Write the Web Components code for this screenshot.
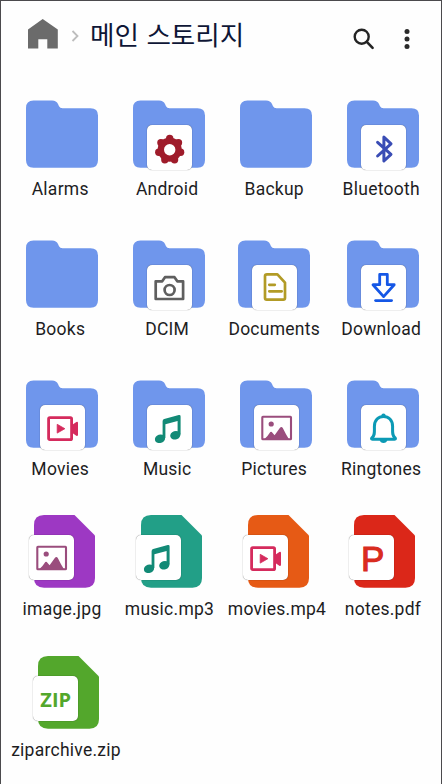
<!DOCTYPE html>
<html lang="ko">
<head>
<meta charset="UTF-8">
<title>메인 스토리지</title>
<style>
  * {
    box-sizing: border-box;
  }

  html, body {
    margin: 0;
    height: 100%;
    background: #fefefe;
    font-family: Roboto, 'Noto Sans CJK KR', sans-serif;
    color: #1d1d1f;
  }
</style>
</head>
<body>
<storage-screen>
  <storage-header slot="header">메인 스토리지</storage-header>

  <storage-item kind="folder">Alarms</storage-item>
  <storage-item kind="folder" badge="gear">Android</storage-item>
  <storage-item kind="folder">Backup</storage-item>
  <storage-item kind="folder" badge="bluetooth">Bluetooth</storage-item>

  <storage-item kind="folder">Books</storage-item>
  <storage-item kind="folder" badge="camera">DCIM</storage-item>
  <storage-item kind="folder" badge="document" style="--icon-shift: -2px">Documents</storage-item>
  <storage-item kind="folder" badge="download">Download</storage-item>

  <storage-item kind="folder" badge="movie">Movies</storage-item>
  <storage-item kind="folder" badge="music">Music</storage-item>
  <storage-item kind="folder" badge="picture">Pictures</storage-item>
  <storage-item kind="folder" badge="bell">Ringtones</storage-item>

  <storage-item kind="file" badge="picture" style="--tint: #9d38c3; --label-shift: 2px">image.jpg</storage-item>
  <storage-item kind="file" badge="music" style="--tint: #229f87; --label-shift: 2.5px">music.mp3</storage-item>
  <storage-item kind="file" badge="movie" style="--tint: #e65a15; --label-shift: 3px">movies.mp4</storage-item>
  <storage-item kind="file" badge="pdf" style="--tint: #db2719; --label-shift: 2px; --icon-shift: -1px">notes.pdf</storage-item>

  <storage-item kind="file" badge="zip" style="--tint: #53a72c; --label-shift: 6px; --icon-shift: 4px">ziparchive.zip</storage-item>
</storage-screen>

<script>
// Badge artwork, drawn on a 45x45 tile
const teeth = Array.from({ length: 7 }, (_, i) => {
  const a = (i * 2 * Math.PI) / 7 - Math.PI / 2;
  return `<circle cx="${(22.7 + 11.2 * Math.cos(a)).toFixed(2)}" cy="${(24.7 + 11.2 * Math.sin(a)).toFixed(2)}" r="3.7"/>`;
}).join('');

const BADGES = {
  gear: `
    <g fill="#9f1c2b">${teeth}<circle cx="22.7" cy="24.7" r="12.1"/></g>
    <circle cx="22.7" cy="24.7" r="5.7" fill="#fff"/>`,
  bluetooth: `
    <path d="M16.6 17.3 L30 29.3 L22.9 36 V12 L30 18.9 L16.6 31" fill="none" stroke="#3a4db5" stroke-width="3" stroke-linecap="round" stroke-linejoin="round"/>`,
  camera: `
    <g fill="none" stroke="#5f5f5f" stroke-width="2.7" stroke-linejoin="round">
      <path d="M8.7 16.3 H15.2 L18 12.2 H27.5 L30.3 16.3 H36.1 V34 H8.7 Z"/>
      <circle cx="22.6" cy="25" r="5"/>
    </g>`,
  document: `
    <g fill="none" stroke="#b29b26" stroke-width="2.7" stroke-linejoin="round" stroke-linecap="round">
      <path d="M15 9.3 H25.4 L33 17.6 V33 Q33 34.7 31.3 34.7 H14.7 Q13 34.7 13 33 V11 Q13 9.3 15 9.3 Z"/>
      <path d="M17.3 19.8 H22.8 M17.3 26.3 H29.7"/>
    </g>`,
  download: `
    <g fill="none" stroke="#1557e6" stroke-width="2.8" stroke-linejoin="round" stroke-linecap="round">
      <path d="M18.7 9.4 H26.3 V19.7 H33.2 L22.6 31.6 L12 19.7 H18.7 Z"/>
      <path d="M14.6 35.6 H30.6"/>
    </g>`,
  movie: `
    <g fill="#d52b5d">
      <rect x="8.6" y="12.6" width="23" height="22" rx="1.2" fill="none" stroke="#d52b5d" stroke-width="2.8"/>
      <path d="M17.2 19.3 L24.9 23.7 L17.2 28.1 Z" stroke="#d52b5d" stroke-width=".8" stroke-linejoin="round"/>
      <path d="M32.4 19.8 L36.3 17 Q38 16.4 38 18 V29.8 Q38 31.4 36.3 30.7 L32.4 28 Z"/>
    </g>`,
  music: `
    <g fill="#128a76">
      <path d="M15.6 16.2 Q15.6 14.5 17.2 14.1 L31.8 10.1 Q33.6 9.7 33.6 11.5 V29.5 H30.6 V16 L18.4 19.2 V33 H15.6 Z"/>
      <ellipse cx="13" cy="33.8" rx="5.2" ry="4.2" transform="rotate(-18 13 33.8)"/>
      <ellipse cx="28.3" cy="30.2" rx="5.2" ry="4.2" transform="rotate(-18 28.3 30.2)"/>
    </g>`,
  picture: `
    <rect x="8.3" y="11.8" width="28.7" height="22.5" rx=".6" fill="none" stroke="#9a4d7d" stroke-width="2.1"/>
    <circle cx="17.2" cy="19" r="2.6" fill="#9a4d7d"/>
    <path d="M10.5 34 Q13.5 31.5 15.6 28 Q17 25.7 18.6 28 L20.6 30.3 L25.8 23 Q27.4 20.8 28.8 23 Q31.5 28.6 34.8 34 Z" fill="#9a4d7d"/>`,
  bell: `
    <path d="M11 32.7 C14 30.5 13.4 27 13.4 21.5 C13.4 15 17.5 11.4 22.5 11.4 C27.5 11.4 31.6 15 31.6 21.5 C31.6 27 31 30.5 34 32.7 Q35.2 34.2 33.5 34.3 H11.5 Q9.8 34.2 11 32.7 Z" fill="none" stroke="#0c9ab5" stroke-width="3" stroke-linejoin="round"/>
    <path d="M20.3 11 Q20.3 8.6 22.5 8.6 Q24.7 8.6 24.7 11 Z M18.6 35 H26.4 Q25.6 38 22.5 38 Q19.4 38 18.6 35 Z" fill="#0c9ab5"/>`,
  pdf: `
    <text x="23.8" y="35.7" text-anchor="middle" font-family="'Liberation Sans', sans-serif" font-size="35" fill="#d92c1f" stroke="#d92c1f" stroke-width="1.1">P</text>`,
  zip: `
    <text x="22.7" y="31.2" text-anchor="middle" font-family="'Open Sans', sans-serif" font-weight="700" font-size="20" fill="#53a72c">ZIP</text>`
};

const SHAPES = {
  folder: `
    <svg class="shape" width="72" height="68" viewBox="0 0 72 68">
      <path d="M7.5 .5 H26 Q30.5 .5 32 4 L33 6.3 Q34 8.3 36.5 8.3 H64.5 Q72 8.3 72 15.5 V60 Q72 67.8 64.5 67.8 H7.5 Q0 67.8 0 60 V8 Q0 .5 7.5 .5 Z"/>
    </svg>`,
  file: `
    <svg class="shape" width="61" height="73" viewBox="0 0 61 73">
      <path d="M10 0 H40.5 L61 20.5 V63 Q61 72.7 51.5 72.7 H10 Q0 72.7 0 63 V10 Q0 0 10 0 Z"/>
    </svg>`
};

class ItemBadge extends HTMLElement {
  constructor() {
    super();
    this.attachShadow({ mode: 'open' });
  }

  connectedCallback() {
    this.shadowRoot.innerHTML = `
    <style>
      :host {
        display: block;
        width: 45px;
        height: 45px;
        border-radius: 5px;
        background: #fff;
        box-shadow: 0 0 1px rgba(0, 0, 0, 0.65);
      }

      svg {
        display: block;
      }
    </style>
    <svg width="45" height="45" viewBox="0 0 45 45">${BADGES[this.getAttribute('name')] || ''}</svg>
  `;
  }
}

class StorageItem extends HTMLElement {
  constructor() {
    super();
    this.attachShadow({ mode: 'open' });
  }

  connectedCallback() {
    const kind = this.getAttribute('kind');
    const badge = this.getAttribute('badge');

    this.shadowRoot.innerHTML = `
    <style>
      :host {
        display: flex;
        flex-direction: column;
        align-items: center;
      }

      .icon {
        position: relative;
        transform: translateX(var(--icon-shift, 0px));
      }

      .folder {
        margin-left: 4px;
        height: 76.5px;
      }

      .file {
        margin-left: 9px;
        height: 82px;
      }

      .shape {
        display: block;
        fill: var(--tint, #6f96ec);
      }

      item-badge {
        position: absolute;
      }

      .folder item-badge {
        left: 13.6px;
        top: 25px;
      }

      .file item-badge {
        left: -5.5px;
        top: 19.5px;
      }

      .label {
        font-size: 17.5px;
        line-height: 24px;
        letter-spacing: 0.25px;
        white-space: nowrap;
        transform: translateX(var(--label-shift, 0.2px));
      }
    </style>
    <div class="icon ${kind}">
      ${SHAPES[kind]}
      ${badge ? `<item-badge name="${badge}"></item-badge>` : ''}
    </div>
    <div class="label"><slot></slot></div>
  `;
  }
}

class StorageHeader extends HTMLElement {
  constructor() {
    super();
    this.attachShadow({ mode: 'open' });

    this.shadowRoot.innerHTML = `
    <style>
      :host {
        display: flex;
        align-items: center;
        height: 66px;
        padding: 0 31px 0 27px;
      }

      svg {
        display: block;
        flex: none;
      }

      .chevron {
        margin: 4px 11px 0 13px;
      }

      .title {
        margin: 0;
        flex: 1;
        font: 400 26.6px/40px 'Noto Sans CJK KR', sans-serif;
        color: #0e1636;
        white-space: nowrap;
      }

      .menu {
        margin: 10px 0 0 29px;
      }

      .search {
        margin-top: 10px;
      }
    </style>
    <svg class="home" width="30" height="30" viewBox="0 0 30 30">
      <path d="M14.7 0 L29.8 10.6 V29.6 H19.3 V20.3 H10.3 V29.6 H0 V10.6 Z" fill="#6b6b6b"/>
    </svg>
    <svg class="chevron" width="8" height="14" viewBox="0 0 8 14">
      <path d="M1.5 2 L6.5 7 L1.5 12" fill="none" stroke="#bdbdbd" stroke-width="1.8"/>
    </svg>
    <h1 class="title"><slot></slot></h1>
    <svg class="search" width="22" height="22" viewBox="0 0 22 22">
      <circle cx="8.7" cy="8.7" r="7" fill="none" stroke="#242424" stroke-width="2.4"/>
      <path d="M13.8 13.8 L19.6 19.8" stroke="#242424" stroke-width="2.6" stroke-linecap="round"/>
    </svg>
    <svg class="menu" width="6" height="22" viewBox="0 0 6 22" fill="#2a2a2a">
      <circle cx="3" cy="3.5" r="2.5"/>
      <circle cx="3" cy="11" r="2.5"/>
      <circle cx="3" cy="18.5" r="2.5"/>
    </svg>
  `;
  }
}

class StorageScreen extends HTMLElement {
  constructor() {
    super();
    this.attachShadow({ mode: 'open' });

    this.shadowRoot.innerHTML = `
    <style>
      :host {
        display: block;
        box-sizing: border-box;
        width: 442px;
        height: 784px;
        overflow: hidden;
        border: solid #4b4a4d;
        border-width: 1px 1px 0;
      }

      .grid {
        display: grid;
        grid-template-columns: repeat(4, 107px);
        grid-template-rows: 140px 140px 135px 141px 120px;
        padding: 33px 0 0 5.5px;
      }
    </style>
    <slot name="header"></slot>
    <div class="grid"><slot></slot></div>
  `;
  }
}

customElements.define('item-badge', ItemBadge);
customElements.define('storage-item', StorageItem);
customElements.define('storage-header', StorageHeader);
customElements.define('storage-screen', StorageScreen);
</script>
</body>
</html>
